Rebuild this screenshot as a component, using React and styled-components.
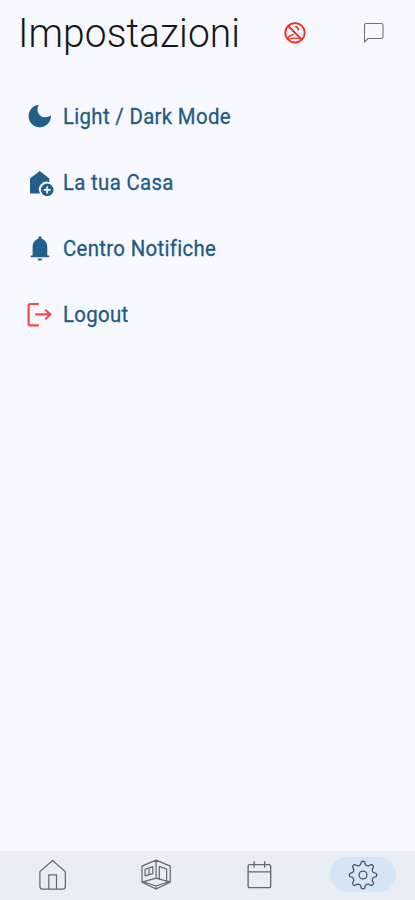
import React, { useState } from "react";
import styled, { createGlobalStyle } from "styled-components";

const GlobalStyle = createGlobalStyle`
  * {
    box-sizing: border-box;
  }
  body {
    margin: 0;
    background-color: #f8f9fe;
    font-family: Roboto, "Liberation Sans", sans-serif;
  }
`;

const Screen = styled.div`
  display: flex;
  flex-direction: column;
  width: 100%;
  height: 100vh;
  background-color: #f8f9fe;
`;

const Header = styled.header`
  display: flex;
  align-items: center;
  height: 66px;
  padding: 0 29px 0 18px;
`;

const Title = styled.h1`
  flex: 1;
  margin: 0;
  color: #15171b;
  font-size: 41px;
  font-weight: 300;
  line-height: 66px;
  letter-spacing: 0.1px;
  white-space: nowrap;
  transform: scaleX(0.949);
  transform-origin: left center;
`;

const HeaderActions = styled.div`
  display: flex;
  align-items: center;
  gap: 55px;
`;

const IconButton = styled.button`
  display: flex;
  padding: 0;
  border: none;
  background: none;
  color: ${({ $color }) => $color};
`;

const Menu = styled.ul`
  flex: 1;
  margin: 0;
  padding: 17px 0 0 26px;
  list-style: none;
`;

const MenuItem = styled.li`
  display: flex;
  align-items: center;
  gap: 9px;
  height: 66px;
`;

const MenuIcon = styled.span`
  display: flex;
  flex: none;
  width: 28px;
  height: 28px;
  color: ${({ $danger }) => ($danger ? "#f5484c" : "#225f8a")};
`;

const MenuLabel = styled.span`
  color: #225a84;
  font-size: 22px;
  font-weight: 400;
  letter-spacing: 0.35px;
  white-space: nowrap;
  -webkit-text-stroke: 0.3px currentColor;
  transform: scaleX(0.927);
  transform-origin: left center;
`;

const BottomNav = styled.nav`
  display: grid;
  grid-template-columns: repeat(4, 1fr);
  align-items: center;
  height: 49px;
  padding: 0 0 2px 2px;
  background-color: #e9edf4;
`;

const NavButton = styled.button`
  display: flex;
  align-items: center;
  justify-content: center;
  justify-self: center;
  width: 66px;
  height: 35px;
  padding: 0;
  border: none;
  border-radius: 18px;
  background-color: ${({ $active }) => ($active ? "#d5e5f5" : "transparent")};
  color: ${({ $active }) => ($active ? "#4a5560" : "#62676e")};
`;

const Svg = ({ size = 28, children }) => (
  <svg
    width={size}
    height={size}
    viewBox={`0 0 ${size} ${size}`}
    fill="none"
    stroke="currentColor"
    strokeLinecap="round"
    strokeLinejoin="round"
  >
    {children}
  </svg>
);

const NoPersonIcon = () => (
  <Svg size={24}>
    <circle cx="12" cy="11.8" r="9.7" strokeWidth="1.8" />
    <path d="M5.2 5 18.8 18.6" strokeWidth="1.9" />
    <path d="M12.8 5.8c1.6.2 2.6 1.6 2.4 3.2" strokeWidth="1.6" />
    <path d="M5.2 17c.6-1.9 2.4-3 5-3.3" strokeWidth="1.4" />
    <path d="M6.6 18c3.2-1.1 7.6-1.1 10.8 0" strokeWidth="1.3" />
  </Svg>
);

const ChatIcon = () => (
  <Svg size={24}>
    <path
      d="M2.5 21V4.2Q2.5 2.5 4.2 2.5H19.3Q21 2.5 21 4.2V15.8Q21 17.5 19.3 17.5H6.2Z"
      strokeWidth="1.1"
    />
  </Svg>
);

const MoonIcon = () => (
  <Svg>
    <path
      d="M12.8 2.7C8.4 10.6 15.8 19 25 13.6 25 20.2 20 25.4 13.8 25.4 7.4 25.4 2.6 20.4 2.6 14.3 2.6 8.3 6.8 3.3 12.8 2.7Z"
      fill="currentColor"
      stroke="none"
    />
  </Svg>
);

const HomePlusIcon = () => (
  <Svg>
    <path
      d="M4 10.5 13.8 3 23.3 10.5V14.2A7.6 7.6 0 0 0 14.2 25.4H4Z"
      fill="currentColor"
      stroke="none"
    />
    <circle cx="21.2" cy="21.9" r="6.3" fill="currentColor" stroke="none" />
    <path d="M21.2 18.4V25.4M17.7 21.9H24.7" stroke="#f8f9fe" strokeWidth="1.8" strokeLinecap="butt" />
  </Svg>
);

const BellIcon = () => (
  <Svg>
    <path
      d="M4.6 23.3V21.4H6.6V12.8C6.6 9 9 5.7 12.4 4.8V3.9A1.6 1.6 0 0 1 15.6 3.9V4.8C19 5.7 21.3 9 21.3 12.8V21.4H23.3V23.3ZM11.7 24.6H16.2A2.2 2.2 0 0 1 11.7 24.6Z"
      fill="currentColor"
      stroke="none"
    />
  </Svg>
);

const LogoutIcon = () => (
  <Svg>
    <path
      d="M12.8 4H4.2Q2.6 4 2.6 5.6V23.7Q2.6 25.3 4.2 25.3H12.8"
      strokeWidth="2.2"
      strokeLinecap="butt"
    />
    <path d="M9.3 14.4H24.2M19.2 9.7 24.4 14.4 19.2 19.2" strokeWidth="2.1" strokeLinecap="butt" strokeLinejoin="miter" />
  </Svg>
);

const HomeIcon = () => (
  <Svg size={32}>
    <path
      d="M1.9 12.6 14.6 1.5 27.3 12.6V27.6Q27.3 30.2 24.7 30.2H4.5Q1.9 30.2 1.9 27.6ZM10.8 30.2V15.9H18.5V30.2"
      strokeWidth="1.2"
    />
  </Svg>
);

const RoomsIcon = () => (
  <Svg size={32}>
    <g strokeWidth="1.2">
      <path d="M15.1 1.1 29.2 7.1V23.1L15.1 30 1 23.1V7.1ZM15.1 1.1V19.1L1 23.1M15.1 19.1 29.2 23.1" />
      <path d="M4.1 10.2 11.8 7.6V14.6L4.1 16.9ZM8 9V15.7" />
      <path d="M18.3 20V7.4L25.6 10V21.8M1 22.2 15.1 27 29.2 22.2M15.1 27V30" />
    </g>
  </Svg>
);

const CalendarIcon = () => (
  <Svg size={32}>
    <path
      d="M5.8 5.7H24.7Q26.7 5.7 26.7 7.7V26.7Q26.7 28.7 24.7 28.7H5.8Q4.1 28.7 4.1 26.7V7.7Q4.1 5.7 5.8 5.7ZM4.1 12.9H26.7M10.1 2.7V8M20.7 2.7V8"
      strokeWidth="1.3"
    />
  </Svg>
);

const GearIcon = () => (
  <Svg size={32}>
    <g strokeWidth="1.3">
      <circle cx="16" cy="16" r="3.9" />
      <path d="M13.4 5.7 14.5 2.8Q16 1.7 17.5 2.8L18.6 5.7Q20 7 21.5 6.8L24.3 5.5Q26.1 5.9 26.5 7.7L25.2 10.5Q25 12 26.3 13.4L29.2 14.5Q30.3 16 29.2 17.5L26.3 18.6Q25 20 25.2 21.5L26.5 24.3Q26.1 26.1 24.3 26.5L21.5 25.2Q20 25 18.6 26.3L17.5 29.2Q16 30.3 14.5 29.2L13.4 26.3Q12 25 10.5 25.2L7.7 26.5Q5.9 26.1 5.5 24.3L6.8 21.5Q7 20 5.7 18.6L2.8 17.5Q1.7 16 2.8 14.5L5.7 13.4Q7 12 6.8 10.5L5.5 7.7Q5.9 5.9 7.7 5.5L10.5 6.8Q12 7 13.4 5.7Z" />
    </g>
  </Svg>
);

const menuItems = [
  { label: "Light / Dark Mode", Icon: MoonIcon },
  { label: "La tua Casa", Icon: HomePlusIcon },
  { label: "Centro Notifiche", Icon: BellIcon },
  { label: "Logout", Icon: LogoutIcon, danger: true },
];

const navItems = [
  { id: "home", name: "Home", Icon: HomeIcon },
  { id: "rooms", name: "Stanze", Icon: RoomsIcon },
  { id: "calendar", name: "Calendario", Icon: CalendarIcon },
  { id: "settings", name: "Impostazioni", Icon: GearIcon },
];

const App = () => {
  const [activeTab, setActiveTab] = useState("settings");

  return (
    <Screen>
      <GlobalStyle />
      <Header>
        <Title>Impostazioni</Title>
        <HeaderActions>
          <IconButton $color="#ee2d24">
            <NoPersonIcon />
          </IconButton>
          <IconButton $color="#70747a">
            <ChatIcon />
          </IconButton>
        </HeaderActions>
      </Header>
      <Menu>
        {menuItems.map(({ label, Icon, danger }) => (
          <MenuItem key={label}>
            <MenuIcon $danger={danger}>
              <Icon />
            </MenuIcon>
            <MenuLabel>{label}</MenuLabel>
          </MenuItem>
        ))}
      </Menu>
      <BottomNav>
        {navItems.map(({ id, name, Icon }) => (
          <NavButton
            key={id}
            title={name}
            $active={activeTab === id}
            onClick={() => setActiveTab(id)}
          >
            <Icon />
          </NavButton>
        ))}
      </BottomNav>
    </Screen>
  );
};

export default App;
